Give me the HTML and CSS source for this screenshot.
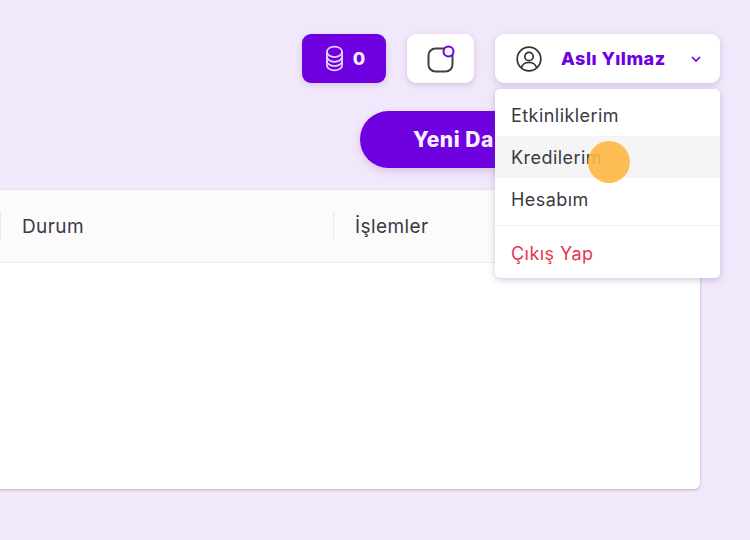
FILE: index.html
```html
<!DOCTYPE html>
<html lang="tr">
<head>
  <meta charset="UTF-8" />
  <meta name="viewport" content="width=device-width, initial-scale=1.0"/>
  <title>Kredilerim</title>
  <link rel="stylesheet" href="styles.css">
</head>
<body>
  <div class="page">
    <div class="topbar">
      <div class="credit-btn">
        <svg class="coin-icon" viewBox="0 0 20 28" fill="none" stroke="currentColor" stroke-width="1.8">
          <ellipse cx="10" cy="7" rx="8" ry="5.500"/>
          <path d="M2 7v14c0 3 3.600 5.500 8 5.500s8-2.500 8-5.500V7"/>
          <path d="M2 12c0 3 3.600 5.500 8 5.500s8-2.500 8-5.500"/>
          <path d="M2 16.500c0 3 3.600 5.500 8 5.500s8-2.500 8-5.500"/>
        </svg>
        <span>0</span>
      </div>
      <div class="notif-btn">
        <svg class="notif-icon" viewBox="0 0 28 28" fill="none">
          <rect x="1.500" y="3.500" width="24" height="23" rx="7" stroke="#3f3f46" stroke-width="2"/>
          <circle cx="21.500" cy="6.500" r="5" fill="#f8f2ff" stroke="#7000e0" stroke-width="2"/>
        </svg>
      </div>
      <div class="user-btn">
        <svg class="user-icon" viewBox="0 0 26 26" fill="none" stroke="#333" stroke-width="1.700">
          <circle cx="13" cy="13" r="11.800"/>
          <circle cx="13" cy="10.500" r="4.200"/>
          <path d="M5.500 21.500c1-3.500 4-5 7.500-5s6.500 1.500 7.500 5"/>
        </svg>
        <span class="user-name">Aslı Yılmaz</span>
        <svg class="chevron" viewBox="0 0 10 6" fill="none" stroke="currentColor" stroke-width="1.700">
          <path d="M1 1l4 4 4-4"/>
        </svg>
      </div>
    </div>

    <div class="action-row">
      <div class="new-btn">Yeni Da</div>
    </div>

    <div class="card">
      <div class="card-head">
        <div class="col col-status">Durum</div>
        <div class="col col-actions">İşlemler</div>
      </div>
    </div>

    <ul class="menu">
      <li>Etkinliklerim</li>
      <li class="active">Kredilerim</li>
      <li>Hesabım</li>
      <li class="sep"></li>
      <li class="logout">Çıkış Yap</li>
    </ul>
    <div class="cursor-dot"></div>
  </div>
</body>
</html>
```

FILE: styles.css
```css
* { margin: 0; padding: 0; box-sizing: border-box; }
html, body {
  width: 750px;
  height: 540px;
  overflow: hidden;
}
body {
  font-family: 'Inter', 'Liberation Sans', sans-serif;
  background: #f2e8fb;
  color: #3a3a44;
}
.page {
  position: relative;
  width: 750px;
  height: 540px;
  padding-top: 34px;
}
.topbar {
  display: flex;
  justify-content: flex-end;
  gap: 21px;
  padding-right: 30px;
}
.credit-btn, .notif-btn, .user-btn {
  display: flex;
  align-items: center;
  height: 49px;
  border-radius: 9px;
}
.credit-btn {
  width: 84px;
  justify-content: center;
  gap: 9px;
  padding-left: 2px;
  background: #6f00e0;
  color: #f6edff;
  font-size: 18px;
  font-weight: 800;
  box-shadow: 0 2px 6px rgba(90, 40, 150, 0.18);
}
.coin-icon { width: 19px; height: 27px; color: #e6d5fb; }
.notif-btn, .user-btn {
  background: #fff;
  box-shadow: 0 2px 6px rgba(90, 60, 130, 0.22);
}
.notif-btn {
  width: 67px;
  justify-content: center;
}
.notif-icon { width: 28px; height: 28px; }
.user-btn {
  width: 225px;
  padding-left: 21px;
}
.user-icon { width: 26px; height: 26px; flex: none; }
.user-name {
  margin-left: 19px;
  width: 130px;
  color: #6f00e0;
  font-size: 18px;
  font-weight: 800;
  letter-spacing: 0.5px;
  white-space: nowrap;
}
.chevron { width: 10px; height: 6px; color: #6f00e0; }
.action-row {
  margin-top: 28px;
  padding-left: 360px;
}
.new-btn {
  width: 180px;
  height: 57px;
  line-height: 57px;
  padding-left: 53px;
  border-radius: 29px;
  background: #6f00e0;
  color: #f8f2ff;
  font-size: 21px;
  font-weight: 800;
  letter-spacing: 0.5px;
  box-shadow: 0 3px 8px rgba(90, 60, 130, 0.2);
}
.card {
  width: 700px;
  height: 299px;
  margin-top: 22px;
  background: #fff;
  border-radius: 0 4px 6px 0;
  box-shadow: 0 1px 3px rgba(90, 60, 90, 0.35);
}
.card-head {
  display: flex;
  align-items: center;
  height: 73px;
  background: #fbfbfb;
  border-bottom: 1px solid #efefef;
}
.col {
  height: 28px;
  line-height: 30px;
  font-size: 19px;
  letter-spacing: 0.4px;
  border-left: 1px solid #e8e8e8;
}
.col-status { width: 333px; padding-left: 21px; }
.col-actions { padding-left: 21px; }
.menu {
  position: absolute;
  left: 495px;
  top: 89px;
  width: 225px;
  height: 189px;
  padding-top: 5px;
  list-style: none;
  background: #fff;
  border-radius: 5px;
  box-shadow: 0 2px 7px rgba(90, 60, 130, 0.28);
  font-size: 18px;
  letter-spacing: 0.45px;
}
.menu li {
  height: 42px;
  line-height: 43px;
  padding-left: 16px;
  white-space: nowrap;
}
.menu .active { background: #f5f5f5; }
.menu .sep {
  height: 1px;
  margin-top: 5px;
  background: #efefef;
}
.menu .logout {
  margin-top: 6px;
  color: #e8324f;
}
.cursor-dot {
  position: absolute;
  left: 588px;
  top: 141px;
  width: 42px;
  height: 42px;
  border-radius: 50%;
  background: rgba(255, 183, 66, 0.9);
}
```
